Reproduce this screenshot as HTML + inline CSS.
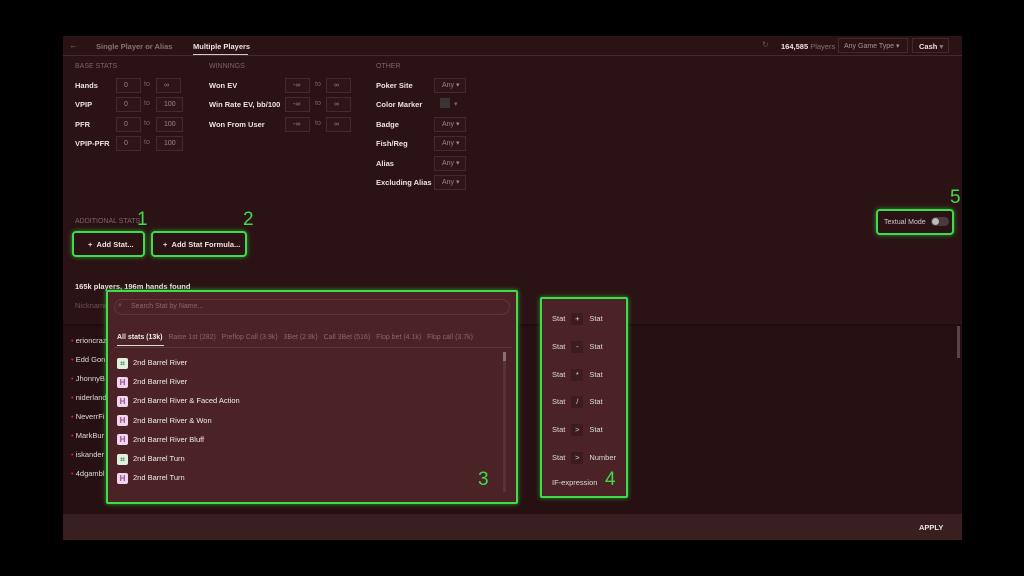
<!DOCTYPE html>
<html><head><meta charset="utf-8"><style>
*{box-sizing:border-box;margin:0;padding:0}
body{width:1024px;height:576px;background:#000;font-family:"Liberation Sans",sans-serif;position:relative;overflow:hidden;color:#e8dcdc;font-size:7.5px}
.a{position:absolute;white-space:nowrap}
#app{left:63px;top:36px;width:899px;height:504px;background:#2b1315}
.lbl{color:#7c6466;font-size:7px}
.b{font-weight:bold;color:#ece2e2}
.inp{position:absolute;border:1px solid #46292b;height:15px;color:#9c8688;font-size:7px;line-height:13px;padding-left:7px;background:#2e1517;white-space:nowrap}
.g{border:2px solid #3fdc4a;border-radius:4px;box-shadow:0 0 5px #2a9a32}
.num{color:#3fdc4a;font-size:19px;font-family:"Liberation Sans",sans-serif}
.ic{display:inline-block;width:11px;height:11px;border-radius:2px;background:#efd6ec;color:#a04a9c;font-size:8px;font-weight:bold;text-align:center;line-height:11px;margin-right:5px;vertical-align:middle}
.ic.s{background:#e4efe4;color:#5a9a5a}
.op{display:inline-block;width:12px;height:12px;background:#3d1c1f;text-align:center;line-height:12px;margin:0 6px;color:#ddd}
</style></head><body>
<div id="app" class="a">
 <div class="a" style="left:0;top:0;width:899px;height:20px;border-bottom:1px solid #48292b"></div>
 <div class="a" style="left:6px;top:4px;color:#8a7072;font-size:9px">←</div>
 <div class="a" style="left:33px;top:6px;color:#8a7072;font-weight:bold;font-size:7.5px">Single Player or Alias</div>
 <div class="a b" style="left:130px;top:6px;font-size:7.5px">Multiple Players</div>
 <div class="a" style="left:130px;top:18px;width:55px;height:1px;background:#ccc"></div>
 <div class="a" style="left:699px;top:4px;color:#6a5254;font-size:8px">↻</div>
 <div class="a" style="left:718px;top:6px"><span class="b">164,585</span> <span style="color:#8a7072">Players</span></div>
 <div class="a" style="left:775px;top:2px;width:70px;height:15px;border:1px solid #46292b;color:#a89294;padding:3px 5px;font-size:7px">Any Game Type ▾</div>
 <div class="a b" style="left:849px;top:2px;width:37px;height:15px;border:1px solid #46292b;padding:3px 6px">Cash <span style="color:#8a7072">▾</span></div>

 <div class="a lbl" style="left:12px;top:27px">BASE STATS</div>
 <div class="a lbl" style="left:146px;top:27px">WINNINGS</div>
 <div class="a lbl" style="left:313px;top:27px">OTHER</div>

 <div class="a b" style="left:12px;top:45px">Hands</div>
 <div class="a b" style="left:12px;top:64px">VPIP</div>
 <div class="a b" style="left:12px;top:84px">PFR</div>
 <div class="a b" style="left:12px;top:103px">VPIP-PFR</div>
 <div class="inp" style="left:53px;top:42px;width:25px">0</div><div class="a lbl" style="left:81px;top:45px">to</div><div class="inp" style="left:93px;top:42px;width:25px">∞</div>
 <div class="inp" style="left:53px;top:61px;width:25px">0</div><div class="a lbl" style="left:81px;top:64px">to</div><div class="inp" style="left:93px;top:61px;width:27px">100</div>
 <div class="inp" style="left:53px;top:81px;width:25px">0</div><div class="a lbl" style="left:81px;top:84px">to</div><div class="inp" style="left:93px;top:81px;width:27px">100</div>
 <div class="inp" style="left:53px;top:100px;width:25px">0</div><div class="a lbl" style="left:81px;top:103px">to</div><div class="inp" style="left:93px;top:100px;width:27px">100</div>

 <div class="a b" style="left:146px;top:45px">Won EV</div>
 <div class="a b" style="left:146px;top:64px">Win Rate EV, bb/100</div>
 <div class="a b" style="left:146px;top:84px">Won From User</div>
 <div class="inp" style="left:222px;top:42px;width:25px">-∞</div><div class="a lbl" style="left:252px;top:45px">to</div><div class="inp" style="left:263px;top:42px;width:25px">∞</div>
 <div class="inp" style="left:222px;top:61px;width:25px">-∞</div><div class="a lbl" style="left:252px;top:64px">to</div><div class="inp" style="left:263px;top:61px;width:25px">∞</div>
 <div class="inp" style="left:222px;top:81px;width:25px">-∞</div><div class="a lbl" style="left:252px;top:84px">to</div><div class="inp" style="left:263px;top:81px;width:25px">∞</div>

 <div class="a b" style="left:313px;top:45px">Poker Site</div>
 <div class="a b" style="left:313px;top:64px">Color Marker</div>
 <div class="a b" style="left:313px;top:84px">Badge</div>
 <div class="a b" style="left:313px;top:103px">Fish/Reg</div>
 <div class="a b" style="left:313px;top:123px">Alias</div>
 <div class="a b" style="left:313px;top:142px">Excluding Alias</div>
 <div class="inp" style="left:371px;top:42px;width:32px">Any ▾</div>
 <div class="a" style="left:377px;top:62px;width:10px;height:10px;background:#3a3436"></div><div class="a lbl" style="left:391px;top:64px">▾</div>
 <div class="inp" style="left:371px;top:81px;width:32px">Any ▾</div>
 <div class="inp" style="left:371px;top:100px;width:32px">Any ▾</div>
 <div class="inp" style="left:371px;top:120px;width:32px">Any ▾</div>
 <div class="inp" style="left:371px;top:139px;width:32px">Any ▾</div>

 <div class="a lbl" style="left:12px;top:182px">ADDITIONAL STATS</div>
 <div class="a num" style="left:74px;top:173px">1</div>
 <div class="a num" style="left:180px;top:173px">2</div>
 <div class="a g b" style="left:9px;top:195px;width:73px;height:26px;padding:7px 0 0 14px">+&nbsp;&nbsp;Add Stat...</div>
 <div class="a g b" style="left:88px;top:195px;width:96px;height:26px;padding:7px 0 0 10px">+&nbsp;&nbsp;Add Stat Formula...</div>

 <div class="a num" style="left:887px;top:151px">5</div>
 <div class="a g" style="left:813px;top:173px;width:78px;height:26px;padding:8px 0 0 6px;color:#ccc;font-size:7px">Textual Mode</div>
 <div class="a" style="left:868px;top:181px;width:18px;height:9px;border-radius:5px;background:#4a3a3c"></div>
 <div class="a" style="left:869px;top:182px;width:7px;height:7px;border-radius:4px;background:#bbb"></div>

 <div class="a b" style="left:12px;top:246px">165k players, 196m hands found</div>
 <div class="a" style="left:12px;top:265px;color:#6a5254">Nickname</div>
 <div class="a" style="left:0;top:288px;width:899px;height:190px;background:#261012;border-top:2px solid #1e0c0e"></div>
 <div class="a" style="left:894px;top:290px;width:3px;height:32px;background:#5a4446"></div>
 <div class="a" style="left:8px;top:295px;line-height:19px;color:#ddd">
  <span style="color:#d22">•</span> erioncraz<br><span style="color:#d22">•</span> Edd Gon<br><span style="color:#d22">•</span> JhonnyB<br><span style="color:#d22">•</span> niderland<br><span style="color:#d22">•</span> NeverrFi<br><span style="color:#d22">•</span> MarkBur<br><span style="color:#d22">•</span> iskander<br><span style="color:#d22">•</span> 4dgambl
 </div>
 <div class="a" style="left:0;top:478px;width:899px;height:26px;background:#3a1f21"></div>
 <div class="a b" style="left:856px;top:487px">APPLY</div>
</div>

<!-- popup 3 -->
<div class="a g" style="left:106px;top:290px;width:412px;height:214px;background:#4b2327;border-radius:2px">
 <div class="a" style="left:6px;top:7px;width:396px;height:16px;border:1px solid #5e3538;border-radius:8px;color:#8a6668;padding:3px 0 0 16px;font-size:7px">Search Stat by Name...</div>
 <div class="a" style="left:10px;top:10px;color:#8a6668;font-size:7px">⌕</div>
 <div class="a" style="left:9px;top:42px;font-size:7px;color:#8a6668;white-space:nowrap"><b style="color:#eee">All stats (13k)</b>&nbsp;&nbsp;&nbsp;Raise 1st (282)&nbsp;&nbsp;&nbsp;Preflop Call (3.9k)&nbsp;&nbsp;&nbsp;3Bet (2.8k)&nbsp;&nbsp;&nbsp;Call 3Bet (516)&nbsp;&nbsp;&nbsp;Flop bet (4.1k)&nbsp;&nbsp;&nbsp;Flop call (3.7k)</div>
 <div class="a" style="left:9px;top:53px;width:47px;height:1px;background:#ddd"></div>
 <div class="a" style="left:6px;top:55px;width:398px;height:1px;background:#5e3538"></div>
 <div class="a" style="left:395px;top:60px;width:3px;height:140px;background:#5a3236"></div>
 <div class="a" style="left:395px;top:60px;width:3px;height:9px;background:#8a7072"></div>
 <div class="a" style="left:9px;top:61px;line-height:19.2px;color:#eee">
  <div><span class="ic s">⌗</span>2nd Barrel River</div>
  <div><span class="ic">H</span>2nd Barrel River</div>
  <div><span class="ic">H</span>2nd Barrel River &amp; Faced Action</div>
  <div><span class="ic">H</span>2nd Barrel River &amp; Won</div>
  <div><span class="ic">H</span>2nd Barrel River Bluff</div>
  <div><span class="ic s">⌗</span>2nd Barrel Turn</div>
  <div><span class="ic">H</span>2nd Barrel Turn</div>
 </div>
 <div class="a num" style="left:370px;top:177px">3</div>
</div>

<!-- popup 4 -->
<div class="a g" style="left:540px;top:297px;width:88px;height:201px;background:#4b2327;border-radius:2px;color:#ddd">
 <div class="a" style="left:10px;top:14px">Stat<span class="op">+</span>Stat</div>
 <div class="a" style="left:10px;top:42px">Stat<span class="op">-</span>Stat</div>
 <div class="a" style="left:10px;top:70px">Stat<span class="op">*</span>Stat</div>
 <div class="a" style="left:10px;top:97px">Stat<span class="op">/</span>Stat</div>
 <div class="a" style="left:10px;top:125px">Stat<span class="op">&gt;</span>Stat</div>
 <div class="a" style="left:10px;top:153px">Stat<span class="op">&gt;</span>Number</div>
 <div class="a" style="left:10px;top:179px">IF-expression</div>
 <div class="a num" style="left:63px;top:170px">4</div>
</div>
</body></html>
